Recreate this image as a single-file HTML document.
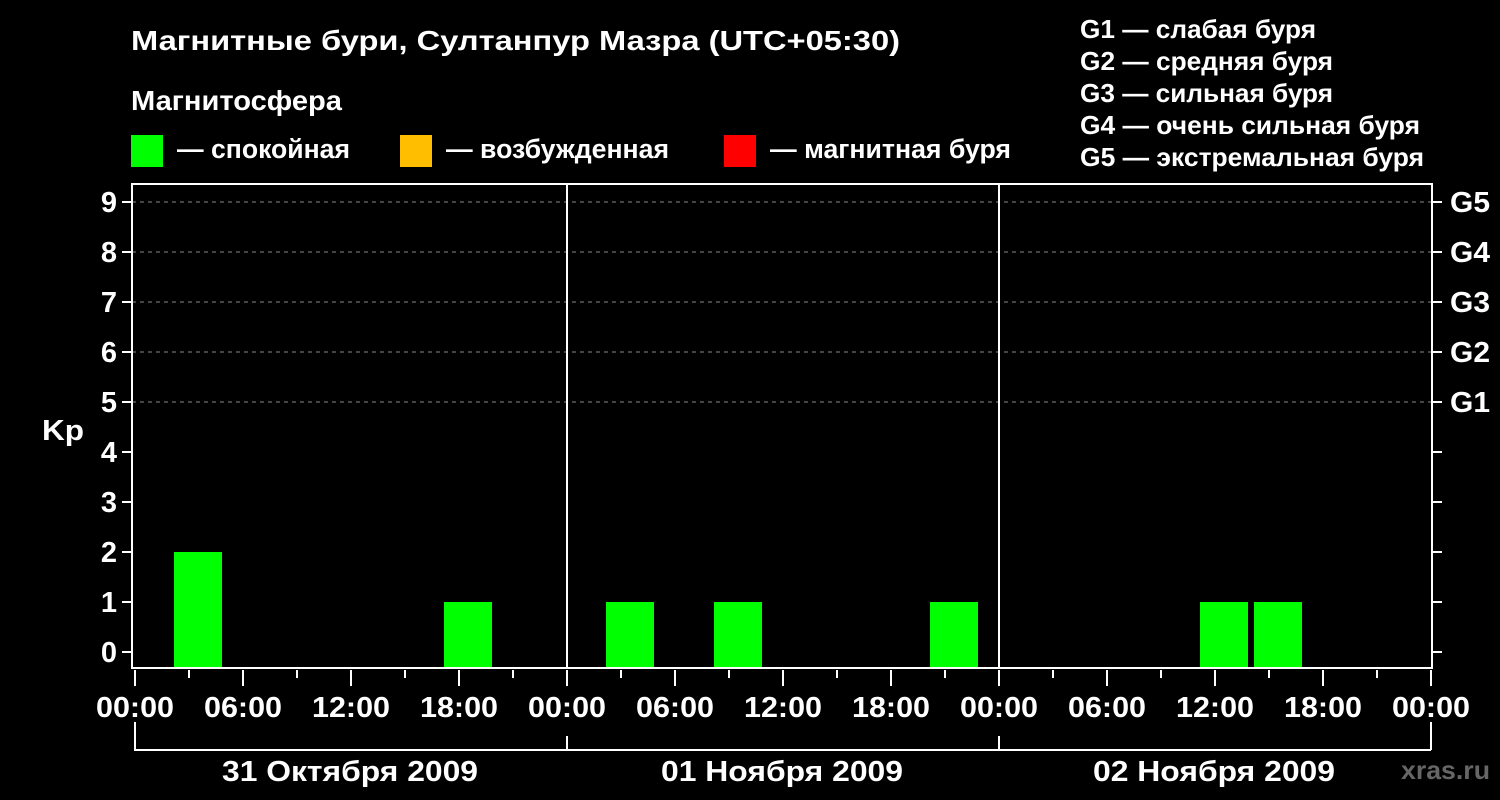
<!DOCTYPE html>
<html><head><meta charset="utf-8"><style>
html,body{margin:0;padding:0;background:#000;}
svg{display:block}
text{font-family:"Liberation Sans",Arial,sans-serif;font-weight:bold;fill:#fff}
</style></head><body>
<svg width="1500" height="800" viewBox="0 0 1500 800" xmlns="http://www.w3.org/2000/svg">
<rect width="1500" height="800" fill="#000"/>
<text x="131" y="50" font-size="28" textLength="769" lengthAdjust="spacingAndGlyphs">Магнитные бури, Султанпур Мазра (UTC+05:30)</text>
<text x="131" y="110" font-size="28" textLength="211" lengthAdjust="spacingAndGlyphs">Магнитосфера</text>
<rect x="131" y="135" width="32" height="32" fill="#00ff00"/>
<text x="177" y="158" font-size="27" textLength="173" lengthAdjust="spacingAndGlyphs">— спокойная</text>
<rect x="400" y="135" width="32" height="32" fill="#ffbf00"/>
<text x="446" y="158" font-size="27" textLength="223" lengthAdjust="spacingAndGlyphs">— возбужденная</text>
<rect x="724" y="135" width="32" height="32" fill="#ff0000"/>
<text x="770" y="158" font-size="27" textLength="241" lengthAdjust="spacingAndGlyphs">— магнитная буря</text>
<g font-size="26">
<text x="1080" y="38" textLength="236" lengthAdjust="spacingAndGlyphs">G1 — слабая буря</text>
<text x="1080" y="70" textLength="253" lengthAdjust="spacingAndGlyphs">G2 — средняя буря</text>
<text x="1080" y="102" textLength="253" lengthAdjust="spacingAndGlyphs">G3 — сильная буря</text>
<text x="1080" y="134" textLength="340" lengthAdjust="spacingAndGlyphs">G4 — очень сильная буря</text>
<text x="1080" y="166" textLength="344" lengthAdjust="spacingAndGlyphs">G5 — экстремальная буря</text>
</g>
<g stroke="#888" stroke-width="1" stroke-dasharray="4,4">
<line x1="132" y1="202" x2="1431" y2="202"/><line x1="132" y1="252" x2="1431" y2="252"/>
<line x1="132" y1="302" x2="1431" y2="302"/><line x1="132" y1="352" x2="1431" y2="352"/>
<line x1="132" y1="402" x2="1431" y2="402"/>
</g>
<g fill="#00ff00">
<rect x="174" y="552" width="48" height="116"/>
<rect x="444" y="602" width="48" height="66"/>
<rect x="606" y="602" width="48" height="66"/>
<rect x="714" y="602" width="48" height="66"/>
<rect x="930" y="602" width="48" height="66"/>
<rect x="1200" y="602" width="48" height="66"/>
<rect x="1254" y="602" width="48" height="66"/>
</g>
<g stroke="#fff" stroke-width="2" fill="none">
<rect x="132" y="184" width="1300" height="484"/>
<line x1="567" y1="184" x2="567" y2="668"/><line x1="999" y1="184" x2="999" y2="668"/>
<path d="M122 202H132M122 252H132M122 302H132M122 352H132M122 402H132M122 452H132M122 502H132M122 552H132M122 602H132M122 652H132"/>
<path d="M1432 202H1442M1432 252H1442M1432 302H1442M1432 352H1442M1432 402H1442M1432 452H1442M1432 502H1442M1432 552H1442M1432 602H1442M1432 652H1442"/>
<path d="M135 670V686M243 670V686M351 670V686M459 670V686M567 670V686M675 670V686M783 670V686M891 670V686M999 670V686M1107 670V686M1215 670V686M1323 670V686M1431 670V686"/>
<path d="M189 670V678M297 670V678M405 670V678M513 670V678M621 670V678M729 670V678M837 670V678M945 670V678M1053 670V678M1161 670V678M1269 670V678M1377 670V678"/>
<path d="M135 722V750H1431M567 736V750M999 736V750M1431 722V750"/>
</g>
<g font-size="29" text-anchor="end">
<text x="117" y="212">9</text><text x="117" y="262">8</text><text x="117" y="312">7</text><text x="117" y="362">6</text><text x="117" y="412">5</text><text x="117" y="462">4</text><text x="117" y="512">3</text><text x="117" y="562">2</text><text x="117" y="612">1</text><text x="117" y="662">0</text>
</g>
<text x="42" y="440" font-size="29" textLength="42" lengthAdjust="spacingAndGlyphs">Kp</text>
<g font-size="29">
<text x="1450" y="212" textLength="40" lengthAdjust="spacingAndGlyphs">G5</text><text x="1450" y="262" textLength="40" lengthAdjust="spacingAndGlyphs">G4</text><text x="1450" y="312" textLength="40" lengthAdjust="spacingAndGlyphs">G3</text><text x="1450" y="362" textLength="40" lengthAdjust="spacingAndGlyphs">G2</text><text x="1450" y="412" textLength="40" lengthAdjust="spacingAndGlyphs">G1</text>
</g>
<g font-size="29" text-anchor="middle">
<text x="135" y="717" textLength="78" lengthAdjust="spacingAndGlyphs">00:00</text><text x="243" y="717" textLength="78" lengthAdjust="spacingAndGlyphs">06:00</text><text x="351" y="717" textLength="78" lengthAdjust="spacingAndGlyphs">12:00</text><text x="459" y="717" textLength="78" lengthAdjust="spacingAndGlyphs">18:00</text>
<text x="567" y="717" textLength="78" lengthAdjust="spacingAndGlyphs">00:00</text><text x="675" y="717" textLength="78" lengthAdjust="spacingAndGlyphs">06:00</text><text x="783" y="717" textLength="78" lengthAdjust="spacingAndGlyphs">12:00</text><text x="891" y="717" textLength="78" lengthAdjust="spacingAndGlyphs">18:00</text>
<text x="999" y="717" textLength="78" lengthAdjust="spacingAndGlyphs">00:00</text><text x="1107" y="717" textLength="78" lengthAdjust="spacingAndGlyphs">06:00</text><text x="1215" y="717" textLength="78" lengthAdjust="spacingAndGlyphs">12:00</text><text x="1323" y="717" textLength="78" lengthAdjust="spacingAndGlyphs">18:00</text><text x="1431" y="717" textLength="78" lengthAdjust="spacingAndGlyphs">00:00</text>
<text x="350" y="781" textLength="256" lengthAdjust="spacingAndGlyphs">31 Октября 2009</text><text x="782" y="781" textLength="242" lengthAdjust="spacingAndGlyphs">01 Ноября 2009</text><text x="1214" y="781" textLength="242" lengthAdjust="spacingAndGlyphs">02 Ноября 2009</text>
</g>
<text x="1401" y="779" font-size="26" textLength="89" lengthAdjust="spacingAndGlyphs" style="fill:#666">xras.ru</text>
</svg>
</body></html>
